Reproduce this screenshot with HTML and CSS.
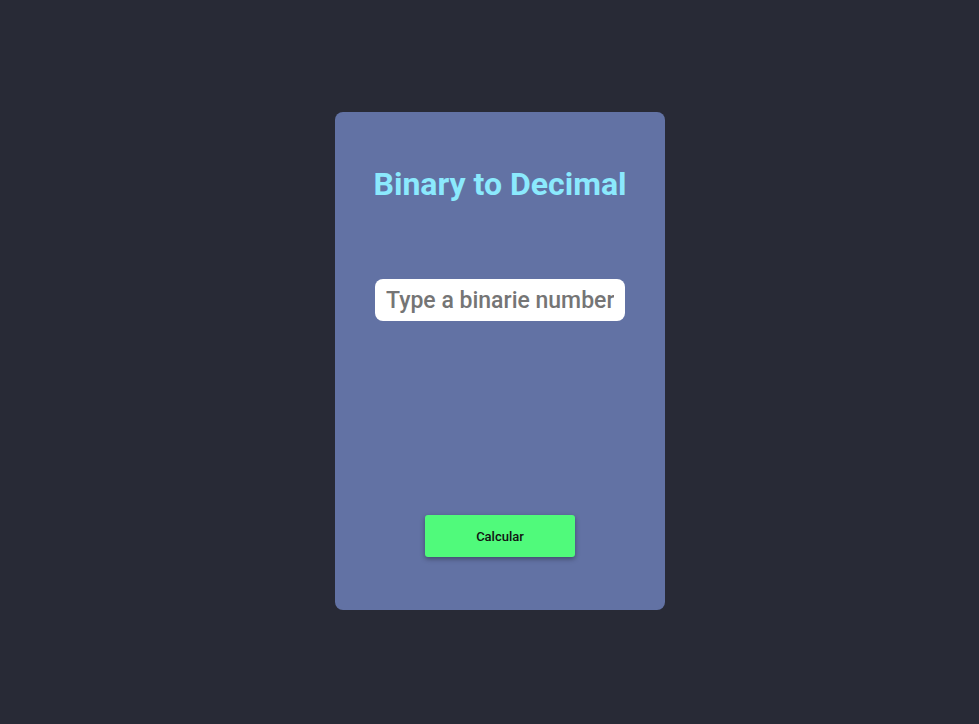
FILE: index.html
```html
<!DOCTYPE html>
<html>
<head>
<meta charset="utf-8">
<link rel="stylesheet" href="styles.css">
</head>
<body>
<main class="card">
  <h1 class="title">Binary to Decimal</h1>
  <input class="field" type="text" placeholder="Type a binarie number">
  <div class="spacer"></div>
  <button class="btn">Calcular</button>
</main>
</body>
</html>
```
FILE: styles.css
```css
html, body {
  margin: 0;
  height: 100%;
}
body {
  background: #282a36;
  font-family: Roboto, "Liberation Sans", sans-serif;
  display: flex;
  justify-content: center;
  align-items: flex-start;
  padding: 112px 0 0 21px;
  box-sizing: border-box;
}
.card {
  width: 330px;
  height: 498px;
  background: #6272a4;
  border-radius: 8px;
  display: flex;
  flex-direction: column;
  align-items: center;
  box-sizing: border-box;
  padding: 0 0 53px;
}
.title {
  margin: 52px 0 0;
  font-size: 32px;
  line-height: 40px;
  font-weight: 700;
  color: #8be9fd;
}
.field {
  margin-top: 75px;
  width: 250px;
  height: 42px;
  box-sizing: border-box;
  border: none;
  border-radius: 8px;
  background: #fff;
  padding: 0 11px;
  font-family: Roboto, "Liberation Sans", sans-serif;
  font-size: 23px;
  font-weight: 500;
  outline: none;
}
.field::placeholder {
  color: #757575;
}
.spacer {
  flex: 1;
}
.btn {
  width: 150px;
  height: 42px;
  border: none;
  border-radius: 3px;
  background: #50fa7b;
  color: #111;
  font-family: Roboto, "Liberation Sans", sans-serif;
  font-size: 13px;
  font-weight: 500;
  box-shadow: 0 2px 5px rgba(0, 0, 0, 0.35);
}
```
